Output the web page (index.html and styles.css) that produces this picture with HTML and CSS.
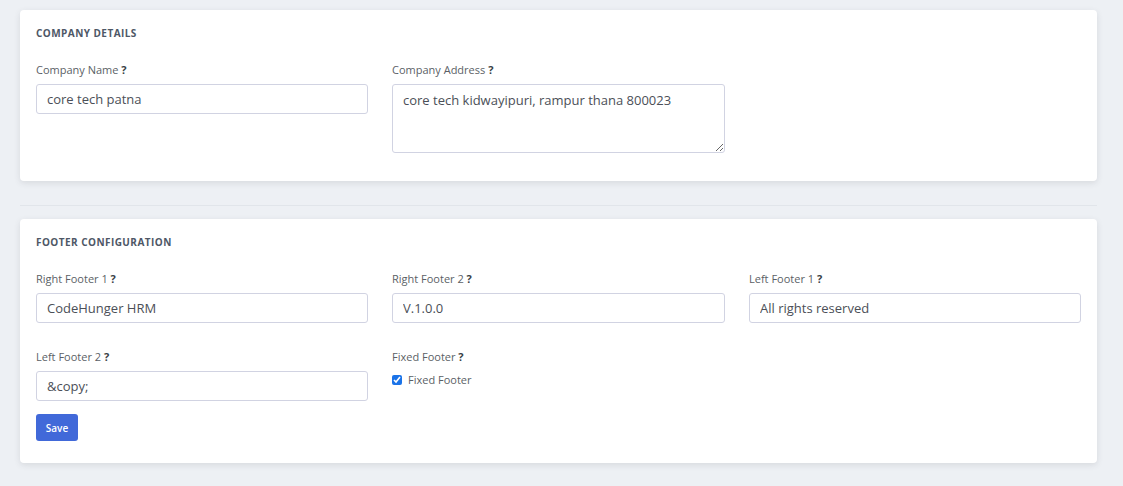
FILE: index.html
```html
<!DOCTYPE html>
<html>
<head>
<meta charset="utf-8">
<link rel="stylesheet" href="styles.css">
</head>
<body>
<div class="page">
  <section class="card card-company">
    <h6 class="card-title">Company Details</h6>
    <div class="grid">
      <div class="field">
        <label class="label">Company Name <b>?</b></label>
        <input class="input" type="text" value="core tech patna">
      </div>
      <div class="field">
        <label class="label">Company Address <b>?</b></label>
        <textarea class="input textarea">core tech kidwayipuri, rampur thana 800023</textarea>
      </div>
    </div>
  </section>
  <hr class="divider">
  <section class="card card-footer">
    <h6 class="card-title">Footer Configuration</h6>
    <div class="grid">
      <div class="field">
        <label class="label">Right Footer 1 <b>?</b></label>
        <input class="input" type="text" value="CodeHunger HRM">
      </div>
      <div class="field">
        <label class="label">Right Footer 2 <b>?</b></label>
        <input class="input" type="text" value="V.1.0.0">
      </div>
      <div class="field">
        <label class="label">Left Footer 1 <b>?</b></label>
        <input class="input" type="text" value="All rights reserved">
      </div>
      <div class="field">
        <label class="label">Left Footer 2 <b>?</b></label>
        <input class="input" type="text" value="&amp;copy;">
      </div>
      <div class="field">
        <label class="label">Fixed Footer <b>?</b></label>
        <label class="check"><input type="checkbox" checked class="checkbox"> Fixed Footer</label>
      </div>
    </div>
    <button class="btn" type="button">Save</button>
  </section>
</div>
</body>
</html>
```
FILE: styles.css
```css
* { box-sizing: border-box; }
html, body { margin: 0; padding: 0; }
body {
  background: #edf0f4;
  font-family: "Open Sans", "Noto Sans", sans-serif;
  color: #5a5c69;
  width: 1123px;
  height: 486px;
  overflow: hidden;
}
.page {
  padding: 10px 26px 0 20px;
}
.card {
  background: #fff;
  border-radius: 4px;
  box-shadow: 0 2px 6px rgba(58, 59, 69, 0.12);
  padding: 16px 16px 0 16px;
}
.card-company { padding-bottom: 28px; }
.card-footer { padding-bottom: 22px; }
.card-title {
  margin: 0 0 22px 0;
  font-size: 10px;
  line-height: 14px;
  font-weight: 700;
  text-transform: uppercase;
  color: #4e5766;
  letter-spacing: 0.45px;
}
.grid {
  display: grid;
  grid-template-columns: 332px 333px 332px;
  column-gap: 24px;
  row-gap: 26px;
}
.field { display: flex; flex-direction: column; align-items: flex-start; }
.label {
  font-size: 11px;
  line-height: 16px;
  color: #5b5f66;
  margin-bottom: 6px;
}
.label b { color: #3a3f46; font-weight: 700; }
.input {
  width: 100%;
  height: 30px;
  border: 1px solid #d1d3e2;
  border-radius: 3px;
  padding: 0 10px;
  font-family: "Open Sans", "Noto Sans", sans-serif;
  font-size: 13px;
  color: #4b4f57;
  background: #fff;
  outline: none;
}
.textarea {
  height: 69px;
  padding: 6px 10px;
  resize: vertical;
  line-height: 18px;
}
.check {
  display: flex;
  align-items: center;
  gap: 6px;
  font-size: 11px;
  line-height: 16px;
  color: #5b5f66;
  margin-top: 1px;
}
.checkbox {
  margin: 0;
  width: 10px;
  height: 10px;
  accent-color: #1a73e8;
}
.divider {
  border: 0;
  border-top: 1px solid #e1e5ea;
  margin: 24px 0 13px 0;
}
.btn {
  margin-top: 13px;
  background: #4169d9;
  color: #fff;
  border: 0;
  border-radius: 3px;
  width: 42px;
  height: 27px;
  font-family: "Open Sans", "Noto Sans", sans-serif;
  font-size: 10px;
  font-weight: 600;
  padding: 0;
}
```
